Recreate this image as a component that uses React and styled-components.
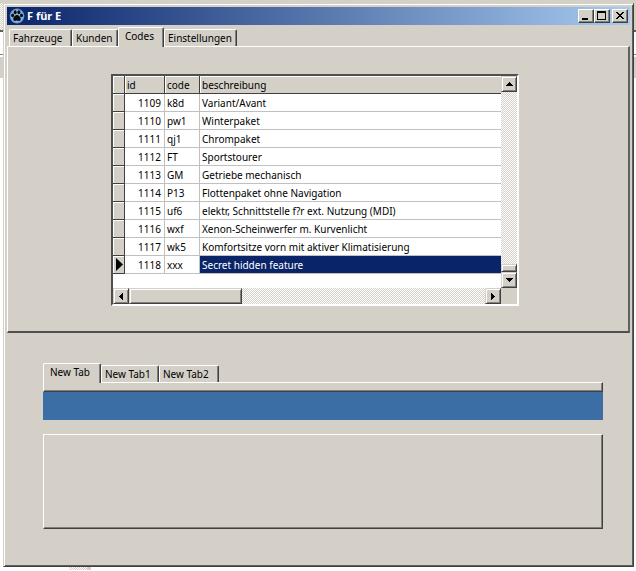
import { useState } from 'react';
import styled, { createGlobalStyle } from 'styled-components';

const rows = [
  { id: 1109, code: 'k8d', text: 'Variant/Avant' },
  { id: 1110, code: 'pw1', text: 'Winterpaket' },
  { id: 1111, code: 'qj1', text: 'Chrompaket' },
  { id: 1112, code: 'FT', text: 'Sportstourer' },
  { id: 1113, code: 'GM', text: 'Getriebe mechanisch' },
  { id: 1114, code: 'P13', text: 'Flottenpaket ohne Navigation' },
  { id: 1115, code: 'uf6', text: 'elektr, Schnittstelle f?r ext. Nutzung (MDI)' },
  { id: 1116, code: 'wxf', text: 'Xenon-Scheinwerfer m. Kurvenlicht' },
  { id: 1117, code: 'wk5', text: 'Komfortsitze vorn mit aktiver Klimatisierung' },
  { id: 1118, code: 'xxx', text: 'Secret hidden feature' },
];

const mainTabs = [
  { label: 'Fahrzeuge', width: 63 },
  { label: 'Kunden', width: 46 },
  { label: 'Codes', width: 46 },
  { label: 'Einstellungen', width: 73 },
];

const subTabs = [
  { label: 'New Tab', width: 58 },
  { label: 'New Tab1', width: 58 },
  { label: 'New Tab2', width: 60 },
];

const arrows = {
  up: 'M3 0h1v1h1v1h1v1h1v1H0V3h1V2h1V1h1z',
  down: 'M0 0h7v1H6v1H5v1H4v1H3V3H2V2H1V1H0z',
  left: 'M3 0h1v7H3V6H2V5H1V4H0V3h1V2h1V1h1z',
  right: 'M0 0h1v1h1v1h1v1h1v1H3v1H2v1H1v1H0z',
};

const Arrow = ({ dir }) => {
  const flat = dir === 'up' || dir === 'down';
  return (
    <svg
      width={flat ? 7 : 4}
      height={flat ? 4 : 7}
      shapeRendering='crispEdges'
      aria-hidden='true'>
      <path d={arrows[dir]} />
    </svg>
  );
};

const Paw = () => (
  <svg width='16' height='16' viewBox='0 0 16 16' aria-hidden='true'>
    <circle cx='8' cy='8' r='7.4' fill='#5f93c4' />
    <circle cx='8' cy='8' r='6.4' fill='#8fb6d8' />
    <ellipse cx='3.6' cy='7.4' rx='1.5' ry='1.8' fill='#070b14' />
    <ellipse cx='6.2' cy='4.3' rx='1.5' ry='2' fill='#070b14' />
    <ellipse cx='9.9' cy='4.3' rx='1.5' ry='2' fill='#070b14' />
    <ellipse cx='12.5' cy='7.4' rx='1.5' ry='1.8' fill='#070b14' />
    <path
      d='M8 7c1.9 0 3.8 2.4 3.8 4.1 0 1.4-1 2-2 1.9-.8 0-1.1-.4-1.8-.4s-1 .4-1.8.4c-1 .1-2-.5-2-1.9C4.200 9.400 6.100 7 8 7z'
      fill='#070b14'
    />
  </svg>
);

const Tabs = ({ label, items, start, indent }) => {
  const [active, setActive] = useState(start);

  return (
    <TabList role='tablist' aria-label={label} $indent={indent}>
      {items.map((tab, i) => (
        <Tab
          key={tab.label}
          type='button'
          role='tab'
          aria-selected={i === active}
          $active={i === active}
          $width={tab.width}
          onClick={() => setActive(i)}>
          {tab.label}
        </Tab>
      ))}
    </TabList>
  );
};

const App = () => {
  const [current, setCurrent] = useState(1118);

  return (
    <Desktop>
      <GlobalStyle />
      <TopStrip />
      <Middle>
        <SideStrip $width={3}>
          <Dither />
          <Toolbar />
        </SideStrip>
        <Window>
          <TitleBar>
            <Paw />
            <Title>F für E</Title>
            <TitleButton type='button' aria-label='Minimieren'>
              <svg width='12' height='10' shapeRendering='crispEdges'>
                <path d='M2 7h6v2H2z' />
              </svg>
            </TitleButton>
            <TitleButton type='button' aria-label='Maximieren'>
              <svg width='12' height='10' shapeRendering='crispEdges'>
                <path fillRule='evenodd' d='M1 0h9v9H1zM2 2v6h7V2z' />
              </svg>
            </TitleButton>
            <TitleButton type='button' aria-label='Schließen' $gap>
              <svg width='12' height='10' shapeRendering='crispEdges'>
                <path d='M2 1h2v1h1v1h2V2h1V1h2v1H9v1H8v1H7v1h1v1h1v1h1v1H8V7H7V6H5v1H4v1H2V7h1V6h1V5h1V4H4V3H3V2H2z' />
              </svg>
            </TitleButton>
          </TitleBar>

          <Main>
            <Tabs label='Bereiche' items={mainTabs} start={2} indent />
            <Page role='tabpanel'>
              <DataGrid>
                <Viewport>
                  <Table>
                    <colgroup>
                      <col width='12' />
                      <col width='40' />
                      <col width='35' />
                      <col />
                    </colgroup>
                    <thead>
                      <tr>
                        <Head />
                        <Head>id</Head>
                        <Head>code</Head>
                        <Head $last>beschreibung</Head>
                      </tr>
                    </thead>
                    <tbody>
                      {rows.map((row) => (
                        <tr key={row.id} onClick={() => setCurrent(row.id)}>
                          <Indicator>
                            {row.id === current && (
                              <svg width='7' height='13' aria-hidden='true'>
                                <path d='M0 0l7 6.5L0 13z' />
                              </svg>
                            )}
                          </Indicator>
                          <Cell $right>{row.id}</Cell>
                          <Cell>{row.code}</Cell>
                          <Cell $last $selected={row.id === current}>
                            {row.text}
                          </Cell>
                        </tr>
                      ))}
                    </tbody>
                  </Table>
                </Viewport>
                <ScrollTrack $vertical>
                  <ScrollButton type='button' aria-label='Nach oben'>
                    <Arrow dir='up' />
                  </ScrollButton>
                  <Spacer />
                  <Thumb $vertical />
                  <ScrollButton type='button' aria-label='Nach unten'>
                    <Arrow dir='down' />
                  </ScrollButton>
                </ScrollTrack>
                <ScrollTrack>
                  <ScrollButton type='button' aria-label='Nach links'>
                    <Arrow dir='left' />
                  </ScrollButton>
                  <Thumb />
                  <Spacer />
                  <ScrollButton type='button' aria-label='Nach rechts'>
                    <Arrow dir='right' />
                  </ScrollButton>
                </ScrollTrack>
              </DataGrid>
            </Page>
          </Main>

          <Lower>
            <Tabs label='Neue Tabs' items={subTabs} start={0} />
            <Panel $height={10} />
            <BlueBar />
            <Panel $height={95} />
          </Lower>
        </Window>
        <SideStrip $width={2}>
          <Dither $plain />
          <Toolbar />
        </SideStrip>
      </Middle>
      <BottomStrip>
        <Grip />
      </BottomStrip>
    </Desktop>
  );
};

export default App;

const GlobalStyle = createGlobalStyle`
  * {
    box-sizing: border-box;
  }

  body {
    margin: 0;
    background: #fff;
    color: #000;
    font: 10px/14px 'Noto Sans', 'Open Sans', sans-serif;
  }

  button {
    font: inherit;
    color: inherit;
    padding: 0;
    margin: 0;
    border-radius: 0;
  }

  svg {
    display: block;
    flex: none;
  }
`;

const face = '#d4d0c8';
const dots = `repeating-conic-gradient(#fff 0 25%, ${face} 0 50%) 0 0 / 2px 2px`;

const Desktop = styled.div`
  display: flex;
  flex-direction: column;
`;

const TopStrip = styled.div`
  height: 3px;
  background: ${face};
`;

const Middle = styled.div`
  display: flex;
`;

/* what shows of the program behind the window */
const SideStrip = styled.div`
  flex: none;
  width: ${(p) => p.$width}px;
  background: #fff;
`;

const Dither = styled.div`
  height: 27px;
  background: ${(p) => (p.$plain ? face : dots)};
`;

const Toolbar = styled.div`
  height: 48px;
  border-top: 2px solid #606060;
  border-bottom: 21px solid ${face};
  background: linear-gradient(#fff 22px, #808080 22px, #808080 23px, #fff 23px);
`;

const BottomStrip = styled.div`
  height: 3px;
  padding-left: 69px;
  background: #fff;
`;

const Grip = styled.div`
  width: 22px;
  height: 3px;
  border-right: 4px solid ${face};
  background: ${dots};
`;

const Window = styled.div`
  flex: 1;
  min-width: 0;
  padding: 3px 3px 37px;
  background: ${face};
  border: 1px solid;
  border-color: ${face} #404040 #404040 ${face};
  box-shadow: inset 1px 1px #fff, inset -1px -1px #606060;
`;

const TitleBar = styled.div`
  display: flex;
  align-items: center;
  height: 18px;
  padding: 0 2px;
  background: linear-gradient(to right, #0a246a, #a6caf0);
`;

const Title = styled.h1`
  flex: 1;
  margin: 0 0 0 2px;
  color: #fff;
  font-size: 11px;
  line-height: 18px;
`;

const TitleButton = styled.button`
  width: 16px;
  height: 14px;
  margin-left: ${(p) => (p.$gap ? 2 : 0)}px;
  padding: 1px;
  background: ${face};
  border: 1px solid;
  border-color: #fff #404040 #404040 #fff;
  box-shadow: inset -1px -1px #808080;
`;

const Main = styled.div`
  padding-top: 2px;
`;

const TabList = styled.div`
  display: flex;
  align-items: flex-end;
  height: 20px;
  margin-bottom: -1px;
  padding-left: ${(p) => (p.$indent ? 2 : 0)}px;
`;

const Tab = styled.button`
  flex: none;
  width: ${(p) => p.$width}px;
  height: ${(p) => (p.$active ? 20 : 17)}px;
  margin-bottom: ${(p) => (p.$active ? 0 : 1)}px;
  padding: ${(p) => (p.$active ? '0 0 3px 6px' : '0 0 0 3px')};
  background: ${face};
  border: 1px solid;
  border-color: #fff #404040 ${face} #fff;
  border-bottom: 0;
  border-radius: 2px 2px 0 0;
  box-shadow: inset -1px 0 #808080;
  position: relative;
  z-index: ${(p) => (p.$active ? 1 : 0)};
  text-align: left;
  white-space: nowrap;
`;

const Page = styled.div`
  padding: 27px 109px 25px 103px;
  border: 1px solid #fff;
  border-right: 2px solid #606060;
  border-bottom: 2px solid #505050;
`;

const DataGrid = styled.div`
  display: grid;
  grid-template-columns: 1fr 16px;
  grid-template-rows: auto 16px;
  border: 2px solid;
  border-color: #505050 #fff #fff #505050;
  background: ${face};
`;

const Viewport = styled.div`
  min-width: 0;
  padding-bottom: 14px;
  overflow: hidden;
  background: #fff;
`;

const Table = styled.table`
  width: 100%;
  table-layout: fixed;
  border-collapse: separate;
  border-spacing: 0;
`;

const Head = styled.th`
  height: 18px;
  padding: 0 2px;
  background: ${face};
  border-right: ${(p) => (p.$last ? 0 : 1)}px solid #404040;
  border-bottom: 1px solid #404040;
  box-shadow: inset 1px 1px #fff;
  font-weight: normal;
  text-align: left;
  white-space: nowrap;
`;

const Indicator = styled.td`
  height: 18px;
  padding: 0 0 0 3px;
  background: ${face};
  border-right: 1px solid #404040;
  border-bottom: 1px solid #404040;
  box-shadow: inset 1px 1px #fff;
`;

const Cell = styled.td`
  height: 18px;
  padding: 0 3px 0 2px;
  border-right: ${(p) => (p.$last ? 0 : 1)}px solid #c0c0c0;
  border-bottom: 1px solid #c0c0c0;
  background: ${(p) => (p.$selected ? '#0a246a' : '#fff')};
  color: ${(p) => (p.$selected ? '#fff' : '#000')};
  text-align: ${(p) => (p.$right ? 'right' : 'left')};
  white-space: nowrap;
`;

const ScrollTrack = styled.div`
  display: flex;
  flex-direction: ${(p) => (p.$vertical ? 'column' : 'row')};
  background: ${dots};
`;

const ScrollButton = styled.button`
  display: flex;
  align-items: center;
  justify-content: center;
  flex: none;
  width: 16px;
  height: 16px;
  background: ${face};
  border: 1px solid;
  border-color: ${face} #404040 #404040 ${face};
  box-shadow: inset 1px 1px #fff, inset -1px -1px #808080;
`;

const Thumb = styled.div`
  flex: none;
  width: ${(p) => (p.$vertical ? '16px' : '29%')};
  height: ${(p) => (p.$vertical ? 8 : 16)}px;
  background: ${face};
  border: 1px solid;
  border-color: ${face} #404040 #404040 ${face};
  box-shadow: inset 1px 1px #fff, inset -1px -1px #808080;
`;

const Spacer = styled.div`
  flex: 1;
`;

const Lower = styled.div`
  padding: 30px 27px 0 36px;
`;

const Panel = styled.div`
  height: ${(p) => p.$height}px;
  border: 1px solid;
  border-color: #fff #404040 #404040 #fff;
  box-shadow: inset -1px -1px #808080;
`;

const BlueBar = styled.div`
  height: 28px;
  margin-bottom: 14px;
  background: #3a6ea5;
`;
